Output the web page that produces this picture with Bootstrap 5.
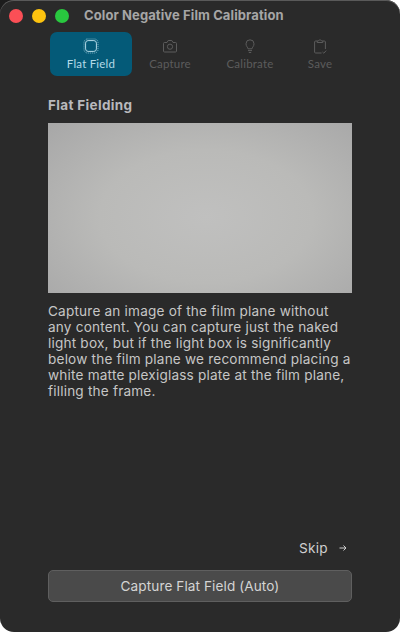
<!DOCTYPE html>
<html lang="en">
<head>
<meta charset="utf-8">
<title>Color Negative Film Calibration</title>
<link href="https://cdn.jsdelivr.net/npm/bootstrap@5.3.0/dist/css/bootstrap.min.css" rel="stylesheet">
<style>
html,body{height:100%;margin:0;}
body{font-family:"Inter","Liberation Sans",sans-serif;overflow:hidden;background:linear-gradient(135deg,#1c1c1c 0 20px,#fff 20px);}
.win{width:400px;height:632px;background:#2a2a2a;border-radius:14px;box-shadow:inset 0 1px 0 #5a5a5a;}
.tbar{height:32px;padding-left:4px;}
.dot{width:14px;height:14px;border-radius:50%;margin:0 4.5px;}
.d-r{background:#fb4f56;}
.d-y{background:#fdc30f;}
.d-g{background:#29c83f;}
.ttl{font-weight:700;font-size:13px;color:#a6a6a6;margin-left:11px;letter-spacing:.1px;}
.tabs{padding-left:50px;height:44px;}
.tabi{height:44px;color:#5c5c5c;font-family:"Lato",sans-serif;font-size:11.5px;line-height:14px;letter-spacing:.2px;}
.tabi svg{width:16px;height:16px;margin-bottom:3px;}
.t1{width:82px;background:#045a78;color:#b4dbe8;border-radius:7px;}
.t2{width:76px;}
.t3{width:84px;}
.t4{width:56px;}
.hd{font-weight:700;font-size:13.5px;line-height:16px;color:#b9b9bd;margin:21px 0 10px;letter-spacing:.35px;}
.pic{height:170px;background:radial-gradient(ellipse 70% 78% at 52% 55%,#c0c0bf 0%,#babab8 50%,#a8a8a8 100%);}
.desc{font-size:13.6px;line-height:16px;color:#c6c6c6;margin:10px 0 0;letter-spacing:.19px;white-space:nowrap;}
.skip{font-size:13.6px;line-height:16px;color:#cfcfcf;padding-right:5px;gap:11px;margin-bottom:14px;letter-spacing:.33px;}
.cap{height:32px;background:#4a4a4a;border:1px solid #5f5f5f;border-radius:5px;color:#d4d4d4;font-size:13.6px;padding:0;letter-spacing:.09px;}
.cap:hover{background:#4a4a4a;border-color:#5f5f5f;color:#d4d4d4;}
.mainc{padding:0 48px 30px;height:556px;}
</style>
</head>
<body>
<div class="win d-flex flex-column">
  <div class="tbar d-flex align-items-center">
    <span class="dot d-r"></span><span class="dot d-y"></span><span class="dot d-g"></span>
    <span class="ttl">Color Negative Film Calibration</span>
  </div>
  <div class="tabs d-flex">
    <div class="tabi t1 d-flex flex-column align-items-center justify-content-center">
      <svg viewBox="0 0 16 16" fill="none" stroke="currentColor"><rect x="2.6" y="2.6" width="10.8" height="10.8" rx="2.5" stroke-width="1"/><rect x="1" y="1" width="14" height="14" rx="3.5" stroke-width=".7" stroke-dasharray="1 1"/></svg>
      <span>Flat Field</span>
    </div>
    <div class="tabi t2 d-flex flex-column align-items-center justify-content-center">
      <svg viewBox="0 0 16 16" fill="none" stroke="currentColor" stroke-width="1"><path d="M2.5 4.5h2.5l1.2-2h3.6l1.2 2h2.5a1 1 0 0 1 1 1v7.5a1 1 0 0 1-1 1h-11a1 1 0 0 1-1-1v-7.5a1 1 0 0 1 1-1z"/><circle cx="8" cy="8.7" r="2.6"/></svg>
      <span>Capture</span>
    </div>
    <div class="tabi t3 d-flex flex-column align-items-center justify-content-center">
      <svg viewBox="0 0 16 16" fill="none" stroke="currentColor" stroke-width="1"><path d="M6 10.8c0-1.4-2-2.4-2-5a4 4 0 0 1 8 0c0 2.6-2 3.6-2 5z"/><path d="M6 12.6h4M6.8 14.5h2.4"/></svg>
      <span>Calibrate</span>
    </div>
    <div class="tabi t4 d-flex flex-column align-items-center justify-content-center">
      <svg viewBox="0 0 16 16" fill="none" stroke="currentColor" stroke-width="1"><path d="M5.2 3H3.6a1 1 0 0 0-1 1v10a1 1 0 0 0 1 1h6M10.8 3h1.6a1 1 0 0 1 1 1v7"/><path d="M5.2 4.5V3l1.5-.3a1.4 1.4 0 0 1 2.6 0l1.5.3v1.5z"/><path d="M10.5 14l1.3 1.2 2.4-2.6"/></svg>
      <span>Save</span>
    </div>
  </div>
  <div class="mainc d-flex flex-column">
    <div class="hd">Flat Fielding</div>
    <div class="pic"></div>
    <p class="desc">Capture an image of the film plane without<br>any content. You can capture just the naked<br>light box, but if the light box is significantly<br>below the film plane we recommend placing a<br>white matte plexiglass plate at the film plane,<br>filling the frame.</p>
    <div class="skip d-flex justify-content-end align-items-center mt-auto">
      <span>Skip</span>
      <svg width="8" height="8" viewBox="0 0 8 8" fill="none" stroke="currentColor" stroke-width="1"><path d="M.5 4h6.5M4.5 1.5L7 4 4.5 6.5"/></svg>
    </div>
    <button type="button" class="btn cap w-100">Capture Flat Field (Auto)</button>
  </div>
</div>
</body>
</html>
